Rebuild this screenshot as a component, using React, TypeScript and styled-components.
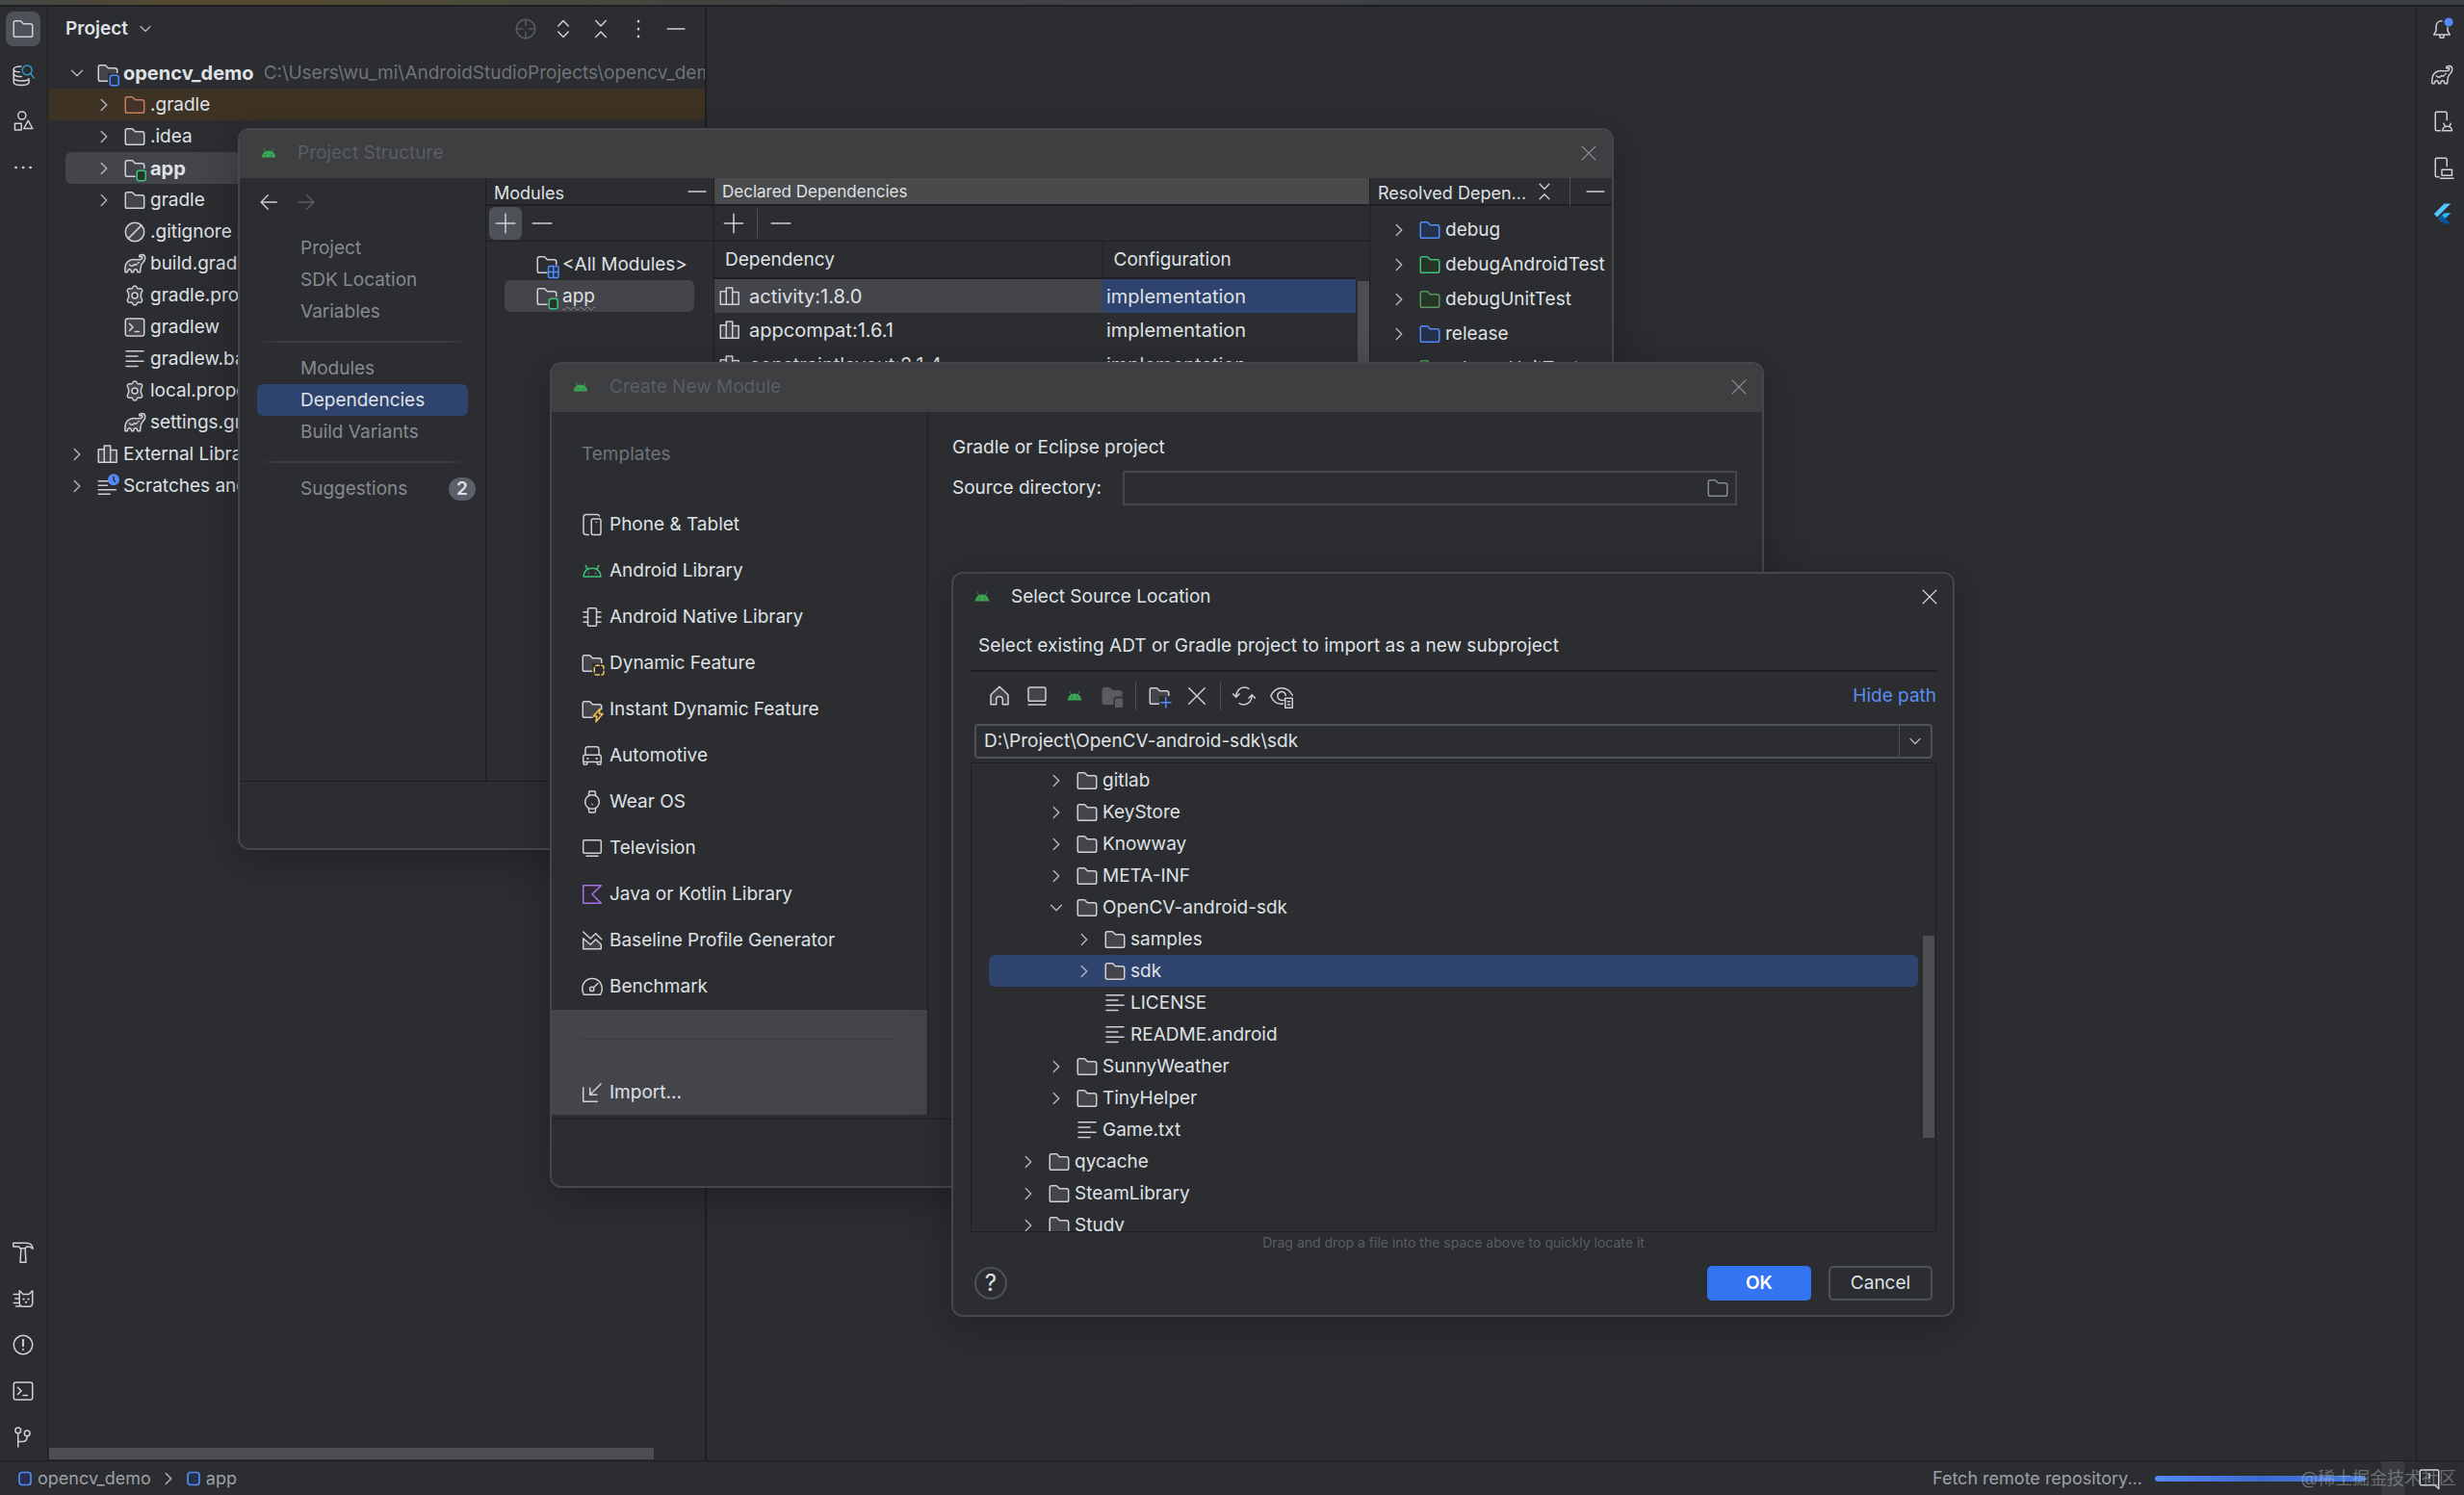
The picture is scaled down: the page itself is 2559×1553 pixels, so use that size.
import React from "react";
import styled, { createGlobalStyle, css } from "styled-components";

const c = {
  bg: "#2b2d30",
  line: "#1e1f22",
  edge: "#45474a",
  title: "#3d3f41",
  text: "#dfe1e5",
  muted: "#868a91",
  dim: "#5a5d63",
  select: "#2e436e",
  grey: "#43454a",
  thumb: "#4d4e51",
  blue: "#548af7",
  green: "#3dc27e",
};

const Global = createGlobalStyle`
  *, *::before, *::after { box-sizing: border-box; }
  body { margin: 0; background: ${c.bg}; overflow: hidden; }
  body, button, input {
    font-family: Inter, "Noto Sans CJK SC", sans-serif;
    font-size: 19px;
    line-height: 24px;
    color: ${c.text};
  }
  button { margin: 0; padding: 0; border: 0; background: none; text-align: left; cursor: pointer; }
  ul { list-style: none; margin: 0; padding: 0; }
  h2, h3, p { margin: 0; font-weight: 400; font-size: 19px; }
  svg { display: block; flex: none; overflow: visible; }
`;

/* ---------- icons ---------- */

type IconName = keyof typeof glyphs;

const S = "#ced0d6";
const folderBody =
  "M8.1 4.35 8.25 4.5H13A1.5 1.5 0 0 1 14.5 6v6.1c0 .8-.55 1.4-1.15 1.4H2.65c-.6 0-1.15-.6-1.15-1.4V3.9c0-.8.55-1.4 1.15-1.4h3.5c.13 0 .25.05.35.15z";
const folderCut =
  "M8 13.5H2.65c-.6 0-1.15-.6-1.15-1.4V3.9c0-.8.55-1.4 1.15-1.4h3.5c.13 0 .25.05.35.15L8.25 4.5H13A1.5 1.5 0 0 1 14.5 6v1.8";
const elephantBody =
  "M1.3 13.8C.8 9.2 2.4 6.2 5.3 5.3c1.9-.6 3.900 0 5.500-.1 1.300-.1 2.400-.7 2.400-1.600 0-.6-.7-.9-1.300-.4-.4.3-.9 0-.8-.5.1-.6.8-1.100 1.800-1.100 1.400 0 2.300 1 2.300 2.400 0 2-1.700 3.100-2.500 4.400-.9 1.500-.6 3.400-1 5.400H9.900c-.1-1.300-.6-1.900-1.400-1.900s-1.300.6-1.400 1.900H5.700c-.1-1.300-.6-1.900-1.400-1.900s-1.300.6-1.400 1.900z";
const cog =
  "M8 1.300c.7 0 1.200.2 1.500 1.200.2.500.7.900 1.400.7 1.200-.3 1.600 0 2 .6s.5 1.200-.2 2c-.5.600-.5 1.100-.5 2.200s0 1.600.5 2.200c.7.800.6 1.400.2 2s-.8.900-2 .6c-.7-.2-1.200.2-1.400.7-.3 1-.8 1.200-1.500 1.200s-1.200-.2-1.500-1.200c-.2-.5-.7-.9-1.400-.7-1.200.3-1.600 0-2-.6s-.5-1.200.2-2c.5-.6.5-1.100.5-2.200s0-1.600-.5-2.200c-.7-.8-.6-1.400-.2-2s.8-.9 2-.6c.7.200 1.200-.2 1.400-.7.3-1 .8-1.200 1.500-1.200z";

const glyphs = {
  folder: <path d={folderBody} fill={c.grey} />,
  folderPlain: <path d={folderBody} fill="none" />,
  folderOrange: <path d={folderBody} fill="#45322b" stroke="#c77d55" />,
  folderBlue: <path d={folderBody} fill="#25324d" stroke={c.blue} />,
  folderGreen: <path d={folderBody} fill="#253627" stroke={c.green} />,
  folderDark: <path d={folderBody} fill="#253627" stroke="#57965c" />,
  folderRoot: (
    <>
      <path d={folderCut} fill={c.grey} />
      <rect x="8" y="8" width="8" height="9" fill={c.bg} stroke="none" />
      <rect x="9.500" y="9.500" width="6" height="7" rx="1.500" fill="#25324d" stroke={c.blue} />
    </>
  ),
  folderModule: (
    <>
      <path d={folderCut} fill="none" />
      <rect x="9.500" y="9.500" width="6" height="7" rx="1.500" fill="#253627" stroke={c.green} />
    </>
  ),
  folderAll: (
    <>
      <path d={folderCut} fill="none" />
      <rect x="9" y="9" width="7" height="8" rx="1" fill="#25324d" stroke={c.blue} />
      <path d="M12.500 9v8M9 13h7" stroke={c.blue} />
    </>
  ),
  folderDynamic: (
    <>
      <path d={folderCut} fill={c.grey} />
      <rect x="8" y="8" width="8" height="8" fill={c.bg} stroke="none" />
      <rect x="9.500" y="9.500" width="6.500" height="6.500" rx="1.500" stroke="#f2c55c" strokeDasharray="2.900 1.700" strokeDashoffset="1" />
    </>
  ),
  folderInstant: (
    <>
      <path d={folderCut} fill={c.grey} />
      <path d="M13.500 7.500 8.800 12.700h2.400l-.6 3.800 4.700-5.500h-2.500z" fill="#3d3223" stroke="#f2c55c" />
    </>
  ),
  folderNew: (
    <>
      <path d={folderCut} fill={c.grey} />
      <path d="M8 8h8v8H8z" fill={c.bg} stroke="none" />
      <path d="M12.500 9v7M9 12.500h7" stroke={c.blue} />
    </>
  ),
  folderOff: (
    <>
      <path d={folderBody} fill="#5a5c5e" stroke="#5a5c5e" />
      <rect x="9.500" y="9" width="6.500" height="7.500" rx="1.500" fill="#5a5c5e" stroke={c.bg} />
    </>
  ),
  ban: (
    <>
      <circle cx="8" cy="8" r="6.500" fill={c.grey} />
      <path d="m3.600 12.400 8.800-8.800" />
    </>
  ),
  elephant: (
    <>
      <path d={elephantBody} fill={c.grey} />
      <path d="M4.300 8.600c.9 1.300 2.500 1.200 3.400-.2M7.700 8.400c.7.500 1.400.3 1.900-.3M10.400 7.200h.5" />
    </>
  ),
  elephantPlain: (
    <>
      <path d={elephantBody} />
      <path d="M4.300 8.600c.9 1.300 2.500 1.200 3.400-.2M7.700 8.400c.7.500 1.400.3 1.900-.3M10.400 7.200h.5" />
    </>
  ),
  cog: (
    <>
      <path d={cog} fill={c.grey} />
      <circle cx="8" cy="8" r="2" fill={c.bg} />
    </>
  ),
  shell: (
    <>
      <rect x="1.500" y="2" width="13" height="12" rx="1.500" fill={c.grey} />
      <path d="m4.300 5.500 2.400 2.400-2.400 2.400M8 11h3" />
    </>
  ),
  terminal: (
    <>
      <rect x="1.500" y="2" width="13" height="12" rx="1.500" />
      <path d="m4.300 5.500 2.400 2.400-2.400 2.400M8 11h3" />
    </>
  ),
  lines: <path d="M2 2.500h12M2 6h8M2 9.500h12M2 13h8" />,
  scratches: (
    <>
      <path d="M1.500 4.500h7M1.500 7.500h6M1.500 10.500h12M1.500 13.500h8" />
      <circle cx="12" cy="3.500" r="4" fill={c.blue} stroke="none" />
      <path d="M12 1.500v2.300l1 1" stroke={c.bg} />
    </>
  ),
  library: (
    <path d="M1.500 4.500h4v9h-4zM5.500 2h4.300v11.500H5.500zM9.800 5h4.300v8.500H9.800z" fill={c.grey} />
  ),
  right: <path d="m6 4 4 4-4 4" stroke="#b4b8bf" />,
  down: <path d="m4 6 4 4 4-4" stroke="#b4b8bf" />,
  target: (
    <>
      <circle cx="8" cy="8" r="6.500" />
      <path d="M8 1.500v4.200M8 10.300v4.200M1.500 8h4.200M10.300 8h4.200" />
    </>
  ),
  expand: <path d="m4.500 6 3.500-3.700L11.500 6M4.500 10 8 13.700 11.500 10" />,
  collapse: <path d="M4.500 2.300 8 6l3.500-3.700M4.500 13.700 8 10l3.500 3.700" />,
  more: <path d="M8 2.700v.1M8 8v.1M8 13.200v.1" strokeWidth="1.700" />,
  dots: <path d="M3 8h.1M8 8h.1M13 8h.1" strokeWidth="1.800" />,
  minus: <path d="M1.500 8h13" />,
  plus: <path d="M1.500 8h13M8 1.500v13" />,
  close: <path d="m2.500 2.500 11 11M13.500 2.500l-11 11" />,
  back: <path d="M14 8H2.500M7.500 2.800 2.300 8l5.200 5.200" />,
  forward: <path d="M2 8h11.500M8.500 2.800 13.700 8l-5.200 5.200" />,
  database: (
    <>
      <path d="M6.500 2C4 1.900 1.500 2.500 1.500 4v8.800c0 2.900 10.500 2.900 10.500 0v-1.500" />
      <path d="M1.500 4c0 1.400 2 1.900 4 1.900M1.500 7c0 1.600 3 2.200 5.500 2M1.500 10c0 2.500 10.500 2.700 10.500.5" />
      <circle cx="10.800" cy="4.600" r="3.300" stroke="#3592c4" />
      <path d="m13.200 7.100 2.300 2.900" stroke="#3592c4" />
    </>
  ),
  shapes: (
    <>
      <circle cx="7.200" cy="4" r="2.700" />
      <path d="M2.300 9.500h4.500V14H2.300zM11.500 7.500l3 5.500h-6z" />
    </>
  ),
  hammer: (
    <path d="M1.200 1.500h9c2.800 0 4.300 1.200 4.600 4-1.500-1.400-2.700-1.600-4.300-1.500l-1 1.200H6L5 4H1.200zM6.600 5.200h2.800l.6 9.600H6z" />
  ),
  cat: (
    <>
      <path d="M5.500 2.500 8 5h4l2.500-2.500v8.300c0 1.500-1 2.700-2.500 2.700H8c-1.500 0-2.500-1.200-2.500-2.700zM1.500 5h4M2.500 8h3M1.500 11h4M3 13.300h3" />
      <path d="M8.200 8.300h.3M11.500 8.300h.3M9.900 10.500h.3" strokeWidth="1.300" />
    </>
  ),
  alert: (
    <>
      <circle cx="8" cy="8" r="6.500" />
      <path d="M8 4.500v4.300M8 11.200v.1" strokeWidth="1.300" />
    </>
  ),
  branch: (
    <>
      <circle cx="4.500" cy="3.300" r="1.900" />
      <circle cx="10.800" cy="5.300" r="1.900" />
      <path d="M4.500 5.300v9.400M10.800 7.300c0 2.800-1.300 3.700-3.300 3.700h-3" />
    </>
  ),
  bell: (
    <>
      <path d="M8 2.500c-2.500 0-4 1.700-4 4v2.700L2.500 12h11L12 9.200V7M6.500 12.500c0 2.500 3 2.500 3 0" />
      <circle cx="12.700" cy="3.300" r="3" fill={c.blue} stroke="none" />
    </>
  ),
  deviceManager: (
    <>
      <path d="M7 14.500H4.500c-.6 0-1-.4-1-1v-11c0-.6.4-1 1-1h6c.6 0 1 .4 1 1V7" />
      <path d="M8.500 14.500c0-4 6.500-4 6.500 0zM9.300 9.500l.9 1.700M14.200 9.500l-.9 1.700" />
    </>
  ),
  runningDevices: (
    <>
      <path d="M6 14.500H4.500c-.6 0-1-.4-1-1v-11c0-.6.4-1 1-1h6c.6 0 1 .4 1 1V7" />
      <path d="M8 9.500h7v4H8zM7 15.500h9" />
    </>
  ),
  flutter: (
    <g stroke="none">
      <path d="M9.700 1 2.500 8.200l2.300 2.200L14.200 1z" fill="#54c5f8" />
      <path d="M9.700 7.500 5.800 11.400 8 13.600l6.200-6.100z" fill="#29b6f6" />
      <path d="m5.800 11.400 2.300-2.300 6.100 5.900H9.700z" fill="#01579b" />
    </g>
  ),
  phoneTablet: (
    <>
      <path d="M5.500 15H4c-1 0-2-.8-2-2V3c0-1 .8-2 2-2h7.500c.8 0 1.400.4 1.500 1" />
      <rect x="7.500" y="4" width="6.500" height="11" rx="1.200" />
      <path d="M10.700 6.300h.1" />
    </>
  ),
  androidOutline: (
    <>
      <path d="M2 12c.4-3.600 2.700-5.800 6-5.800s5.600 2.200 6 5.800zM4.800 7 3.500 4.300M11.200 7l1.300-2.700" stroke={c.green} />
      <path d="M5.500 9.700h.1M10.400 9.700h.1" stroke={c.green} />
    </>
  ),
  android: (
    <g stroke="none" fill="#3aa655">
      <path d="M.8 12.500C1 9.800 2.200 7.700 4.200 6.500L2.600 3.300l.6-.3 1.700 3.200a8.500 8.500 0 0 1 6.200 0L12.800 3l.6.3-1.600 3.200c2 1.200 3.200 3.300 3.400 6z" />
      <path d="M4.500 9.300h1.200v1H4.500zM10.300 9.300h1.200v1h-1.200z" fill="#2b4a33" />
    </g>
  ),
  chip: (
    <>
      <rect x="5" y="1.800" width="6" height="12.400" rx=".8" />
      <path d="M2 4.500h3M2 8h3M2 11.500h3M11 4.500h3M11 8h3M11 11.500h3" />
    </>
  ),
  car: (
    <>
      <path d="M3.300 7.500V3.700c0-1 .6-1.900 1.700-1.900h6c1.100 0 1.700.9 1.700 1.900v3.800" />
      <path d="M3 7.500h10c.6 0 1.200.6 1.200 1.500v3.300H1.800V9c0-.9.6-1.500 1.200-1.500zM2 12.300v1.400c0 .7 2.500.7 2.500 0v-1.400M11.500 12.300v1.400c0 .7 2.500.7 2.500 0v-1.400" />
      <path d="M4.800 10h.2M11 10h.2" strokeWidth="1.400" />
    </>
  ),
  watch: (
    <>
      <circle cx="8" cy="8" r="4.900" />
      <path d="m5.500 3.700.5-3h4l.5 3M5.500 12.300l.5 3h4l.5-3M8 9.700v.2" />
    </>
  ),
  tv: (
    <>
      <rect x="1.800" y="2.500" width="12.400" height="9" rx=".8" />
      <path d="M4 13.500h8" />
    </>
  ),
  kotlin: <path d="M14.200 1.800H1.800v12.400h12.400L8 8z" fill="#2f2936" stroke="#a571e6" />,
  profile: (
    <>
      <path d="m1.800 2 5 4.700L10.500 3.200l4 4" />
      <path d="m1.800 6.500 5 4.300 3.700-3.600 3.700 3.600v3H1.800z" fill={c.grey} />
    </>
  ),
  gauge: (
    <>
      <path d="M2.300 13.500C-.6 8.200 2.500 2.300 8 2.300s8.600 5.900 5.700 11.200z" />
      <circle cx="7.800" cy="9.600" r="1.400" />
      <path d="m9 8.500 3-2.800" />
    </>
  ),
  importArrow: <path d="M1.800 4.500v9.700h9.700M14 2 6.500 9.500M6.500 4.800v4.700h4.800" />,
  home: (
    <path d="M2 7.200 8 1.500l6 5.700v6.600h-3.800v-3.300c0-3-4.400-3-4.400 0v3.300H2z" fill={c.grey} />
  ),
  desktop: (
    <>
      <rect x="2" y="2" width="12" height="9.500" rx="1.200" fill={c.grey} />
      <path d="M2 14h12" />
    </>
  ),
  refresh: (
    <path d="M2.500 8.500C2.500 4.600 5 2 8.300 2c1.200 0 2.200.3 3 1M13.500 7.500c0 3.900-2.500 6.500-5.800 6.500-1.200 0-2.200-.3-3-1M.3 6.500l2.200 2.300 2.200-2.300M11.300 9.500l2.200-2.300 2.200 2.300" />
  ),
  eye: (
    <>
      <path d="M9 13.300C5.500 13.900 2.300 12 .5 8 2.300 4 5 2.500 8 2.500s5.700 1.500 7.500 5" />
      <path d="M9.500 10.800C7 11.500 5.200 10 5.200 8S7 5 8 5s2.800.8 2.800 2.700" />
      <path d="M10.500 9.500h5v6.700h-5zM12.300 11.800h1.400M12.300 14h1.400" />
    </>
  ),
  square: <rect x="2" y="1.500" width="12" height="13" rx="3" fill="#25324d" stroke={c.blue} strokeWidth="1.700" />,
  message: (
    <>
      <path d="M2.500 2h11c.5 0 1 .4 1 1v12l-2.500-2.500H2.500c-.6 0-1-.4-1-1V3c0-.6.4-1 1-1z" />
      <path d="M8 4.500v3.500M8 9.900v.1" />
    </>
  ),
};

function Icon({ name, size = 24, color = S }: { name: IconName; size?: number; color?: string }) {
  return (
    <svg
      width={size}
      height={size}
      viewBox="0 0 16 16"
      fill="none"
      stroke={color}
      strokeWidth="1"
      strokeLinecap="round"
      strokeLinejoin="round"
      aria-hidden="true"
    >
      {glyphs[name]}
    </svg>
  );
}

/* ---------- shared parts ---------- */

const IconButton = styled.button<{ $on?: boolean }>`
  display: flex;
  align-items: center;
  justify-content: center;
  flex: none;
  width: 36px;
  height: 36px;
  border-radius: 8px;
  background: ${(p) => (p.$on ? "#4e5157" : "transparent")};
`;

const Spacer = styled.div`
  flex: 1;
`;

const VLine = styled.span`
  flex: none;
  width: 1px;
  height: 30px;
  margin: 0 3px;
  background: #4e5157;
`;

function Tool({ icon, label, on, color, size }: { icon: IconName; label: string; on?: boolean; color?: string; size?: number }) {
  return (
    <IconButton type="button" aria-label={label} $on={on}>
      <Icon name={icon} color={color} size={size} />
    </IconButton>
  );
}

type Node = {
  text: string;
  icon: IconName;
  depth?: number;
  open?: boolean;
  leaf?: boolean;
  bold?: boolean;
  note?: string;
  selected?: boolean;
  tinted?: boolean;
};

const TreeItem = styled.li<{ $tinted?: boolean }>`
  padding: 0 18px;
  background: ${(p) => (p.$tinted ? "#3d3223" : "transparent")};
`;

const TreeRow = styled.button<{ $indent: number; $tall?: boolean; $fill?: string }>`
  display: flex;
  align-items: center;
  width: 100%;
  height: ${(p) => (p.$tall ? 36 : 33)}px;
  padding-left: ${(p) => p.$indent}px;
  border-radius: 6px;
  white-space: nowrap;
  background: ${(p) => p.$fill || "transparent"};
`;

const Twist = styled.span`
  display: flex;
  justify-content: center;
  flex: none;
  width: 24px;
  margin-right: 8px;
`;

const Label = styled.span<{ $bold?: boolean }>`
  margin-left: 4px;
  ${(p) => p.$bold && "font-size: 20px; font-weight: 700;"}
`;

const Note = styled.span`
  margin-left: 10px;
  color: #6f737a;
`;

function Tree({
  nodes,
  tall,
  fill = c.grey,
  label,
  base = 0,
  step = 28,
}: {
  nodes: Node[];
  tall?: boolean;
  fill?: string;
  label: string;
  base?: number;
  step?: number;
}) {
  return (
    <ul role="tree" aria-label={label}>
      {nodes.map((n) => (
        <TreeItem key={n.text} role="treeitem" $tinted={n.tinted}>
          <TreeRow
            type="button"
            $indent={((n.depth || 0) + base) * step}
            $tall={tall}
            $fill={n.selected ? fill : undefined}
          >
            <Twist>{!n.leaf && <Icon name={n.open ? "down" : "right"} size={22} />}</Twist>
            <Icon name={n.icon} />
            <Label $bold={n.bold}>{n.text}</Label>
            {n.note && <Note>{n.note}</Note>}
          </TreeRow>
        </TreeItem>
      ))}
    </ul>
  );
}

/* ---------- main window ---------- */

const Screen = styled.div`
  position: relative;
  display: flex;
  flex-direction: column;
  height: 100vh;
  background: ${c.bg};
  overflow: hidden;
`;

const TopStrip = styled.div`
  flex: none;
  height: 7px;
  border-bottom: 2px solid ${c.line};
  background: linear-gradient(90deg, #414545 0, #54492f 7%, #544a30 12%, #494a3a 20%, #3f4142 32%, #3c3f41 100%);
`;

const Workspace = styled.div`
  display: flex;
  flex: 1;
  min-height: 0;
`;

const Rail = styled.nav<{ $side: "left" | "right" }>`
  display: flex;
  flex-direction: column;
  align-items: center;
  gap: 12px;
  flex: none;
  width: 50px;
  ${(p) =>
    p.$side === "left"
      ? css`
          padding: 5px 2px 6px 0;
          border-right: 1px solid ${c.line};
        `
      : css`
          padding: 5px 0 6px 2px;
          border-left: 1px solid ${c.line};
        `}
`;

const ProjectPanel = styled.section`
  display: flex;
  flex-direction: column;
  flex: none;
  width: 684px;
  border-right: 2px solid ${c.line};
  overflow: hidden;
`;

const PanelHeader = styled.header`
  display: flex;
  align-items: center;
  gap: 3px;
  height: 52px;
  padding: 0 12px 6px 18px;
`;

const PanelTitle = styled.button`
  display: flex;
  align-items: center;
  gap: 8px;
  font-weight: 600;
`;

const HScroll = styled.div`
  width: 628px;
  height: 12px;
  margin: 0 0 1px 1px;
  background: ${c.thumb};
`;

const Editor = styled.main`
  flex: 1;
`;

const StatusBar = styled.footer`
  display: flex;
  align-items: center;
  flex: none;
  height: 36px;
  padding: 0 24px 0 18px;
  border-top: 1px solid ${c.line};
  color: #9da0a8;
  font-size: 18px;
`;

const Crumb = styled.a`
  display: flex;
  align-items: center;
  gap: 5px;
  color: inherit;
  text-decoration: none;
`;

const CrumbSep = styled.span`
  margin: 0 7px;
`;

const Task = styled.span`
  margin-right: 13px;
`;

const Progress = styled.div`
  width: 219px;
  height: 6px;
  border-radius: 3px;
  background: linear-gradient(90deg, #548af7, #3a6bd0 50%, #4a7de0);
`;

const StatusBlock = styled.span`
  width: 24px;
  height: 35px;
  margin: 0 14px 0 16px;
  background: #393b40;
`;

const Watermark = styled.span`
  position: absolute;
  right: 8px;
  bottom: 5px;
  font-size: 18px;
  color: rgba(190, 192, 196, 0.45);
`;

const projectNodes: Node[] = [
  { text: "opencv_demo", icon: "folderRoot", open: true, bold: true, note: "C:\\Users\\wu_mi\\AndroidStudioProjects\\opencv_demo" },
  { text: ".gradle", icon: "folderOrange", depth: 1, tinted: true },
  { text: ".idea", icon: "folder", depth: 1 },
  { text: "app", icon: "folderModule", depth: 1, bold: true, selected: true },
  { text: "gradle", icon: "folder", depth: 1 },
  { text: ".gitignore", icon: "ban", depth: 1, leaf: true },
  { text: "build.gradle.kts", icon: "elephant", depth: 1, leaf: true },
  { text: "gradle.properties", icon: "cog", depth: 1, leaf: true },
  { text: "gradlew", icon: "shell", depth: 1, leaf: true },
  { text: "gradlew.bat", icon: "lines", depth: 1, leaf: true },
  { text: "local.properties", icon: "cog", depth: 1, leaf: true },
  { text: "settings.gradle.kts", icon: "elephant", depth: 1, leaf: true },
  { text: "External Libraries", icon: "library" },
  { text: "Scratches and Consoles", icon: "scratches" },
];

/* ---------- dialogs ---------- */

const Dialog = styled.section<{ $x: number; $y: number; $w: number; $h: number }>`
  position: absolute;
  left: ${(p) => p.$x}px;
  top: ${(p) => p.$y}px;
  width: ${(p) => p.$w}px;
  height: ${(p) => p.$h}px;
  display: flex;
  flex-direction: column;
  border: 2px solid ${c.edge};
  border-radius: 12px;
  background: ${c.bg};
  box-shadow: 0 10px 40px rgba(0, 0, 0, 0.25);
  overflow: hidden;
`;

const TitleBar = styled.header<{ $active?: boolean }>`
  display: flex;
  align-items: center;
  gap: 22px;
  flex: none;
  height: 50px;
  padding: 0 6px 2px 22px;
  background: ${(p) => (p.$active ? c.bg : c.title)};
  color: ${(p) => (p.$active ? c.text : c.dim)};
`;

function Title({ text, active }: { text: string; active?: boolean }) {
  return (
    <TitleBar $active={active}>
      <Icon name="android" size={16} />
      <h2>{text}</h2>
      <Spacer />
      <Tool icon="close" label={`Close ${text}`} size={20} color={active ? "#dfe1e5" : "#8b8e94"} />
    </TitleBar>
  );
}

const DialogBody = styled.div`
  display: flex;
  flex: 1;
  min-height: 0;
`;

const DialogFoot = styled.div`
  flex: none;
  height: 70px;
  border-top: 1px solid ${c.line};
`;

/* Project Structure */

const Side = styled.nav`
  display: flex;
  flex-direction: column;
  flex: none;
  width: 256px;
  padding: 7px 18px 0;
  border-right: 1px solid ${c.line};
`;

const History = styled.div`
  display: flex;
  gap: 3px;
  margin: 0 0 13px -6px;
`;

const SideItem = styled.button<{ $on?: boolean }>`
  display: flex;
  align-items: center;
  height: 33px;
  padding-left: 45px;
  border-radius: 6px;
  color: ${(p) => (p.$on ? c.text : c.muted)};
  background: ${(p) => (p.$on ? c.select : "transparent")};
`;

const SideRule = styled.span`
  height: 2px;
  margin: 14px 0 10px;
  background: linear-gradient(90deg, transparent, #3d3f42 12%, #3d3f42 88%, transparent);
`;

const Count = styled.span`
  min-width: 28px;
  margin: 0 -8px 0 auto;
  border-radius: 12px;
  background: #5a5f69;
  color: ${c.text};
  font-weight: 600;
  text-align: center;
`;

const Column = styled.section<{ $w?: number }>`
  display: flex;
  flex-direction: column;
  ${(p) => (p.$w ? `flex: none; width: ${p.$w}px;` : "flex: 1; min-width: 0;")}
  & + & {
    border-left: 1px solid ${c.line};
  }
`;

const ColumnHead = styled.header<{ $accent?: boolean }>`
  display: flex;
  align-items: center;
  flex: none;
  height: 29px;
  padding: 0 3px 0 8px;
  border-bottom: 2px solid ${c.line};
  background: ${(p) => (p.$accent ? "#494a4b" : "transparent")};

  h3 {
    padding-top: ${(p) => (p.$accent ? 0 : 4)}px;
    font-size: ${(p) => (p.$accent ? 17 : 18)}px;
  }
  button {
    width: 28px;
    height: 27px;
  }
  span {
    margin: 0 12px;
  }
`;

const ColumnTools = styled.div`
  display: flex;
  align-items: center;
  gap: 4px;
  flex: none;
  height: 37px;
  padding-left: 3px;
  border-bottom: 1px solid ${c.line};

  button {
    width: 34px;
    height: 34px;
    border-radius: 6px;
  }
`;

const ModuleList = styled.ul`
  padding: 7px 20px 0 19px;
`;

const ModuleRow = styled.button<{ $on?: boolean }>`
  display: flex;
  align-items: center;
  width: 100%;
  height: 33px;
  padding-left: 32px;
  border-radius: 6px;
  white-space: nowrap;
  background: ${(p) => (p.$on ? c.grey : "transparent")};
`;

const Wavy = styled.span`
  margin-left: 4px;
  text-decoration: underline wavy #8b8e94 1px;
  text-decoration-skip-ink: none;
  text-underline-offset: 4px;
`;

const TableArea = styled.div`
  display: flex;
  flex: 1;
  min-height: 0;
  overflow: hidden;
`;

const DepTable = styled.table`
  flex: 1;
  align-self: flex-start;
  border-collapse: collapse;
  table-layout: fixed;
  font-size: 20px;

  th {
    height: 38px;
    padding: 0 0 0 11px;
    border-bottom: 2px solid ${c.line};
    font-weight: 400;
    font-size: 19px;
    text-align: left;
  }
  th + th {
    border-left: 1px solid ${c.line};
  }
  th:first-child {
    width: 403px;
  }
  td {
    height: 36px;
    padding: 0 0 0 4px;
  }
`;

const DepRow = styled.tr<{ $on?: boolean }>`
  ${(p) =>
    p.$on &&
    css`
      td { background: ${c.grey}; }
      td + td { background: ${c.select}; }
    `}
`;

const DepName = styled.span`
  display: flex;
  align-items: center;
  gap: 8px;
`;

const TableScroll = styled.div`
  width: 12px;
  height: 360px;
  margin: 41px 0 0 2px;
  background: ${c.thumb};
`;

const ResolvedList = styled.div`
  padding-top: 7px;
  overflow: hidden;
`;

const deps = ["activity:1.8.0", "appcompat:1.6.1", "constraintlayout:2.1.4"];

const resolved: Node[] = [
  { text: "debug", icon: "folderBlue" },
  { text: "debugAndroidTest", icon: "folderGreen" },
  { text: "debugUnitTest", icon: "folderDark" },
  { text: "release", icon: "folderBlue" },
  { text: "releaseUnitTest", icon: "folderDark" },
];

function ProjectStructure() {
  return (
    <Dialog aria-label="Project Structure" $x={247} $y={133} $w={1429} $h={750}>
      <Title text="Project Structure" />
      <DialogBody>
        <Side>
          <History>
            <Tool icon="back" label="Back" size={22} />
            <Tool icon="forward" label="Forward" size={22} color="#5a5d63" />
          </History>
          <SideItem type="button">Project</SideItem>
          <SideItem type="button">SDK Location</SideItem>
          <SideItem type="button">Variables</SideItem>
          <SideRule />
          <SideItem type="button">Modules</SideItem>
          <SideItem type="button" $on>Dependencies</SideItem>
          <SideItem type="button">Build Variants</SideItem>
          <SideRule />
          <SideItem type="button">
            Suggestions<Count>2</Count>
          </SideItem>
        </Side>
        <Column $w={236}>
          <ColumnHead>
            <h3>Modules</h3>
            <Spacer />
            <Tool icon="minus" label="Hide modules" size={22} />
          </ColumnHead>
          <ColumnTools>
            <Tool icon="plus" label="Add module" on />
            <Tool icon="minus" label="Remove module" />
          </ColumnTools>
          <ModuleList>
            <li>
              <ModuleRow type="button">
                <Icon name="folderAll" />
                <Label>&lt;All Modules&gt;</Label>
              </ModuleRow>
            </li>
            <li>
              <ModuleRow type="button" $on>
                <Icon name="folderModule" />
                <Wavy>app</Wavy>
              </ModuleRow>
            </li>
          </ModuleList>
        </Column>
        <Column>
          <ColumnHead $accent>
            <h3>Declared Dependencies</h3>
          </ColumnHead>
          <ColumnTools>
            <Tool icon="plus" label="Add dependency" />
            <VLine />
            <Tool icon="minus" label="Remove dependency" />
          </ColumnTools>
          <TableArea>
            <DepTable>
              <thead>
                <tr>
                  <th scope="col">Dependency</th>
                  <th scope="col">Configuration</th>
                </tr>
              </thead>
              <tbody>
                {deps.map((d, i) => (
                  <DepRow key={d} $on={i === 0}>
                    <td>
                      <DepName>
                        <Icon name="library" />
                        {d}
                      </DepName>
                    </td>
                    <td>implementation</td>
                  </DepRow>
                ))}
              </tbody>
            </DepTable>
            <TableScroll />
          </TableArea>
        </Column>
        <Column $w={252}>
          <ColumnHead>
            <h3>Resolved Depen...</h3>
            <Spacer />
            <Tool icon="collapse" label="Collapse all" size={22} />
            <VLine />
            <Tool icon="minus" label="Hide resolved dependencies" size={22} />
          </ColumnHead>
          <ResolvedList>
            <Tree nodes={resolved} tall label="Resolved dependencies" />
          </ResolvedList>
        </Column>
      </DialogBody>
      <DialogFoot />
    </Dialog>
  );
}

/* Create New Module */

const Templates = styled.nav`
  display: flex;
  flex-direction: column;
  flex: none;
  width: 391px;
  padding-top: 28px;
  margin-bottom: 4px;
  border-right: 1px solid ${c.line};

  h3 {
    flex: none;
    height: 65px;
    padding: 4px 0 0 31px;
    color: #6f737a;
  }
`;

const Template = styled.button`
  display: flex;
  align-items: center;
  gap: 6px;
  flex: none;
  height: 48px;
  padding-left: 30px;
`;

const ImportCell = styled.button`
  display: flex;
  flex-direction: column;
  justify-content: space-between;
  flex: none;
  height: 109px;
  padding: 30px 31px 11px 30px;
  background: ${c.grey};
`;

const ImportRule = styled.span`
  width: 100%;
  height: 1px;
  background: #393b40;
`;

const ImportLabel = styled.span`
  display: flex;
  align-items: center;
  gap: 6px;
`;

const Form = styled.div`
  display: flex;
  flex-direction: column;
  gap: 12px;
  flex: 1;
  padding: 25px 26px 0 25px;
`;

const Field = styled.div`
  display: flex;
  align-items: center;

  label {
    width: 177px;
  }
`;

const DirBox = styled.div`
  display: flex;
  align-items: center;
  flex: 1;
  height: 36px;
  border: 2px solid #45474a;

  input {
    flex: 1;
    height: 100%;
    padding: 0 8px;
    border: 0;
    outline: 0;
    background: none;
  }
`;

const templates: [IconName, string][] = [
  ["phoneTablet", "Phone & Tablet"],
  ["androidOutline", "Android Library"],
  ["chip", "Android Native Library"],
  ["folderDynamic", "Dynamic Feature"],
  ["folderInstant", "Instant Dynamic Feature"],
  ["car", "Automotive"],
  ["watch", "Wear OS"],
  ["tv", "Television"],
  ["kotlin", "Java or Kotlin Library"],
  ["profile", "Baseline Profile Generator"],
  ["gauge", "Benchmark"],
];

function CreateModule() {
  return (
    <Dialog aria-label="Create New Module" $x={571} $y={376} $w={1261} $h={858}>
      <Title text="Create New Module" />
      <DialogBody>
        <Templates>
          <h3>Templates</h3>
          {templates.map(([icon, name]) => (
            <Template type="button" key={name}>
              <Icon name={icon} />
              {name}
            </Template>
          ))}
          <ImportCell type="button">
            <ImportRule />
            <ImportLabel>
              <Icon name="importArrow" />
              Import...
            </ImportLabel>
          </ImportCell>
        </Templates>
        <Form>
          <p>Gradle or Eclipse project</p>
          <Field>
            <label htmlFor="source-dir">Source directory:</label>
            <DirBox>
              <input id="source-dir" type="text" />
              <Tool icon="folderPlain" label="Browse" color="#868a91" />
            </DirBox>
          </Field>
        </Form>
      </DialogBody>
      <DialogFoot />
    </Dialog>
  );
}

/* Select Source Location */

const Chooser = styled.div`
  display: flex;
  flex-direction: column;
  flex: 1;
  min-height: 0;
  padding: 0 17px 15px 18px;
`;

const Prompt = styled.p`
  height: 52px;
  padding: 13px 0 0 8px;
  border-bottom: 2px solid ${c.line};
`;

const Tools = styled.div`
  display: flex;
  align-items: center;
  gap: 3px;
  height: 50px;
  padding-left: 12px;
`;

const PathLink = styled.a`
  color: #5b8def;
  text-decoration: none;
`;

const PathBox = styled.div`
  display: flex;
  flex: none;
  height: 36px;
  margin: 4px 4px 4px;
  border: 2px solid #4e5157;
  border-radius: 4px;

  input {
    flex: 1;
    padding: 0 8px;
    border: 0;
    outline: 0;
    background: none;
  }
  button {
    width: 33px;
    height: 32px;
    border-left: 1px solid #4e5157;
    border-radius: 0;
  }
`;

const FilePane = styled.div`
  display: flex;
  flex: 1;
  min-height: 0;
  padding-top: 1px;
  border: 1px solid ${c.line};
  overflow: hidden;
`;

const FileList = styled.div`
  flex: 1;
`;

const FileScroll = styled.div`
  width: 12px;
  height: 210px;
  margin: 178px 1px 0 -13px;
  background: ${c.thumb};
`;

const Hint = styled.p`
  margin-bottom: 13px;
  line-height: 22px;
  font-size: 14px;
  text-align: center;
  color: ${c.dim};
`;

const Actions = styled.div`
  display: flex;
  align-items: center;
  gap: 18px;
  padding: 0 4px;
`;

const Help = styled.button`
  width: 34px;
  height: 34px;
  border: 2px solid #4e5157;
  border-radius: 50%;
  text-align: center;
  font-size: 24px;
`;

const Action = styled.button<{ $primary?: boolean }>`
  width: 108px;
  height: 36px;
  border-radius: 5px;
  text-align: center;
  border: 2px solid ${(p) => (p.$primary ? "#3574f0" : "#4e5157")};
  background: ${(p) => (p.$primary ? "#3574f0" : "transparent")};
  color: ${(p) => (p.$primary ? "#fff" : c.text)};
  font-weight: ${(p) => (p.$primary ? 600 : 400)};
`;

const files: Node[] = [
  { text: "gitlab", icon: "folder", depth: 1 },
  { text: "KeyStore", icon: "folder", depth: 1 },
  { text: "Knowway", icon: "folder", depth: 1 },
  { text: "META-INF", icon: "folder", depth: 1 },
  { text: "OpenCV-android-sdk", icon: "folder", depth: 1, open: true },
  { text: "samples", icon: "folder", depth: 2 },
  { text: "sdk", icon: "folder", depth: 2, selected: true },
  { text: "LICENSE", icon: "lines", depth: 2, leaf: true },
  { text: "README.android", icon: "lines", depth: 2, leaf: true },
  { text: "SunnyWeather", icon: "folder", depth: 1 },
  { text: "TinyHelper", icon: "folder", depth: 1 },
  { text: "Game.txt", icon: "lines", depth: 1, leaf: true },
  { text: "qycache", icon: "folder" },
  { text: "SteamLibrary", icon: "folder" },
  { text: "Study", icon: "folder" },
];

function SelectSource() {
  return (
    <Dialog aria-label="Select Source Location" $x={988} $y={594} $w={1042} $h={774}>
      <Title text="Select Source Location" active />
      <Chooser>
        <Prompt>Select existing ADT or Gradle project to import as a new subproject</Prompt>
        <Tools>
          <Tool icon="home" label="Home directory" />
          <Tool icon="desktop" label="Desktop directory" />
          <Tool icon="android" label="Project directory" size={16} />
          <Tool icon="folderOff" label="Module directory" />
          <VLine />
          <Tool icon="folderNew" label="New folder" />
          <Tool icon="close" label="Delete" />
          <VLine />
          <Tool icon="refresh" label="Refresh" />
          <Tool icon="eye" label="Show hidden files" />
          <Spacer />
          <PathLink href="#path">Hide path</PathLink>
        </Tools>
        <PathBox>
          <input type="text" aria-label="Path" defaultValue="D:\Project\OpenCV-android-sdk\sdk" />
          <Tool icon="down" label="Recent paths" size={20} />
        </PathBox>
        <FilePane>
          <FileList>
            <Tree nodes={files} fill={c.select} base={1} step={29} label="Files" />
          </FileList>
          <FileScroll />
        </FilePane>
        <Hint>Drag and drop a file into the space above to quickly locate it</Hint>
        <Actions>
          <Help type="button" aria-label="Help">?</Help>
          <Spacer />
          <Action type="button" $primary>OK</Action>
          <Action type="button">Cancel</Action>
        </Actions>
      </Chooser>
    </Dialog>
  );
}

export default function App() {
  return (
    <Screen>
      <Global />
      <TopStrip />
      <Workspace>
        <Rail $side="left" aria-label="Tool windows">
          <Tool icon="folderPlain" label="Project" on />
          <Tool icon="database" label="App Inspection" />
          <Tool icon="shapes" label="Resource Manager" />
          <Tool icon="dots" label="More tool windows" />
          <Spacer />
          <Tool icon="hammer" label="Build" />
          <Tool icon="cat" label="Logcat" />
          <Tool icon="alert" label="Problems" />
          <Tool icon="terminal" label="Terminal" />
          <Tool icon="branch" label="Version Control" />
        </Rail>
        <ProjectPanel>
          <PanelHeader>
            <PanelTitle type="button">
              Project
              <Icon name="down" size={20} />
            </PanelTitle>
            <Spacer />
            <Tool icon="target" label="Select opened file" color="#5a5d63" />
            <Tool icon="expand" label="Expand all" />
            <Tool icon="collapse" label="Collapse all" />
            <Tool icon="more" label="Options" />
            <Tool icon="minus" label="Hide" size={22} />
          </PanelHeader>
          <Tree nodes={projectNodes} label="Project files" />
          <Spacer />
          <HScroll />
        </ProjectPanel>
        <Editor />
        <Rail $side="right" aria-label="Right tool windows">
          <Tool icon="bell" label="Notifications" />
          <Tool icon="elephantPlain" label="Gradle" />
          <Tool icon="deviceManager" label="Device Manager" />
          <Tool icon="runningDevices" label="Running Devices" />
          <Tool icon="flutter" label="Flutter" />
        </Rail>
      </Workspace>
      <StatusBar>
        <Crumb href="#opencv_demo">
          <Icon name="square" size={16} />
          opencv_demo
        </Crumb>
        <CrumbSep>
          <Icon name="right" size={22} />
        </CrumbSep>
        <Crumb href="#app">
          <Icon name="square" size={16} />
          app
        </Crumb>
        <Spacer />
        <Task>Fetch remote repository...</Task>
        <Progress role="progressbar" aria-label="Fetch remote repository" />
        <StatusBlock />
        <Icon name="message" />
      </StatusBar>
      <ProjectStructure />
      <CreateModule />
      <SelectSource />
      <Watermark>@稀土掘金技术社区</Watermark>
    </Screen>
  );
}
